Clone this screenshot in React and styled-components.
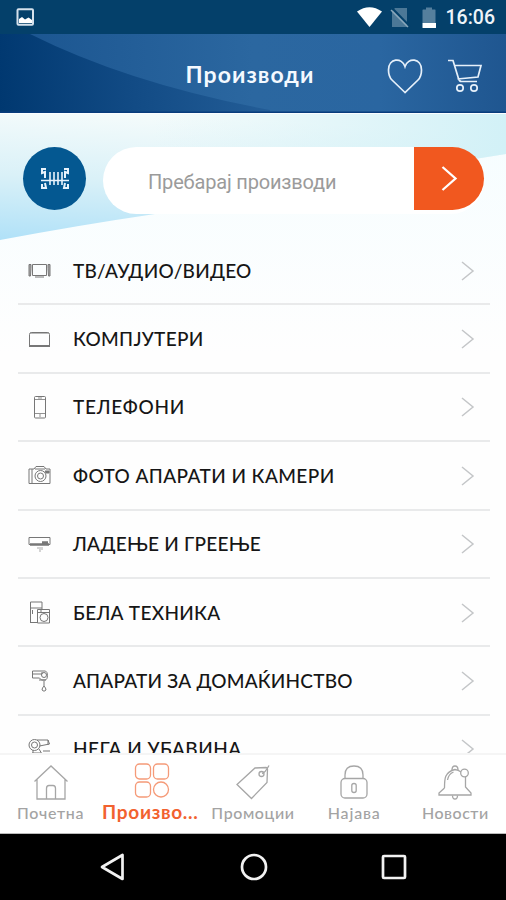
import React, { useState } from 'react';
import styled, { createGlobalStyle } from 'styled-components';

/* ──────────────  Styled components  ────────────── */

const GlobalStyle = createGlobalStyle`
  * {
    box-sizing: border-box;
  }

  body {
    margin: 0;
    background-color: #fff;
  }
`;

const Screen = styled.div`
  width: 506px;
  height: 900px;
  display: flex;
  flex-direction: column;
  overflow: hidden;
  background-color: #fefefe;
  font-family: Lato, 'Noto Sans', sans-serif;
`;

const StatusBar = styled.div`
  height: 34px;
  flex-shrink: 0;
  display: flex;
  align-items: center;
  justify-content: space-between;
  padding: 0 11px 0 16px;
  background-color: #04406a;

  svg {
    display: block;
  }
`;

const StatusGroup = styled.div`
  display: flex;
  align-items: center;
`;

const Clock = styled.span`
  font-family: Roboto, sans-serif;
  font-size: 19.5px;
  font-weight: 500;
  line-height: 34px;
  margin-left: 9px;
  padding-top: 2px;
  color: #eef4f9;
`;

const Header = styled.header`
  position: relative;
  height: 79px;
  flex-shrink: 0;
  display: grid;
  grid-template-columns: 1fr auto 1fr;
  align-items: center;
  padding: 0 23px 0 17px;
  background-color: #2a669f;
`;

const Backdrop = styled.svg`
  position: absolute;
  top: 0;
  left: 0;
  z-index: 0;
`;

const Title = styled.h1`
  position: relative;
  grid-column: 2;
  margin: 0;
  font-size: 23px;
  font-weight: 700;
  line-height: 30px;
  letter-spacing: 1.05px;
  color: #f4f9ff;
`;

const HeaderActions = styled.div`
  position: relative;
  display: flex;
  justify-content: flex-end;
  gap: 24px;
  padding-top: 4px;
`;

const PlainButton = styled.button`
  display: flex;
  padding: 0;
  border: none;
  background: transparent;
  cursor: pointer;
`;

const Content = styled.main`
  position: relative;
  flex: 1;
  min-height: 0;
  overflow: hidden;
`;

const SearchRow = styled.div`
  position: relative;
  display: flex;
  gap: 17px;
  height: 124px;
  padding: 34px 22px 0 23px;
`;

const ScanButton = styled(PlainButton)`
  width: 63px;
  height: 63px;
  flex-shrink: 0;
  align-items: center;
  justify-content: center;
  border-radius: 50%;
  background-color: #045891;
`;

const SearchField = styled.div`
  flex: 1;
  height: 67px;
  display: flex;
  align-items: flex-start;
  border-radius: 34px;
  background-color: #fff;
`;

const SearchInput = styled.input`
  flex: 1;
  min-width: 0;
  height: 67px;
  padding: 2px 0 0 45px;
  border: none;
  outline: none;
  background: transparent;
  font-family: Roboto, sans-serif;
  font-size: 20px;
  letter-spacing: -0.18px;
  color: #555;

  &::placeholder {
    color: #9b9b9b;
    opacity: 1;
  }
`;

const SubmitButton = styled(PlainButton)`
  width: 70px;
  height: 63px;
  align-items: center;
  justify-content: center;
  border-radius: 0 32px 32px 0;
  background-color: #f1581f;
`;

const CategoryList = styled.ul`
  position: relative;
  margin: 0;
  padding: 0 16px 0 18px;
  list-style: none;
`;

const CategoryRow = styled.li`
  height: 68.4px;
  display: flex;
  align-items: center;
  padding: 1px 15px 0 9px;
  border-bottom: 2px solid #e9eaeb;
  cursor: pointer;
`;

const CategoryIcon = styled.svg`
  width: 25px;
  height: 25px;
  flex-shrink: 0;
  fill: none;
  stroke: #777;
  stroke-width: 1;
`;

const CategoryName = styled.span`
  flex: 1;
  padding-left: 21px;
  font-size: 19px;
  font-weight: 500;
  line-height: 24px;
  letter-spacing: ${(props) => props.$tracking};
  white-space: nowrap;
  color: #161616;
`;

const TabBar = styled.nav`
  height: 81px;
  flex-shrink: 0;
  display: grid;
  grid-template-columns: repeat(5, 101.2px);
  border-top: 2px solid #f5f5f5;
  border-bottom: 1px solid #bbb;
  background-color: #fff;
`;

const Tab = styled.button`
  display: flex;
  flex-direction: column;
  align-items: center;
  min-width: 0;
  padding: ${(props) => (props.$active ? '7px 0 0' : '9px 0 0')};
  border: none;
  background: transparent;
  font-family: inherit;
  color: ${(props) => (props.$active ? '#f2622f' : '#a3a3a3')};
  cursor: pointer;

  svg {
    width: 36px;
    height: 36px;
    flex-shrink: 0;
    fill: none;
    stroke: ${(props) => (props.$active ? '#f59a78' : '#a6a6a6')};
    stroke-width: 1.3;
  }
`;

const TabLabel = styled.span`
  margin-top: ${(props) => (props.$active ? '4px' : '3px')};
  margin-left: ${(props) => (props.$active ? '-3px' : '0')};
  font-size: ${(props) => (props.$active ? '19px' : '16px')};
  font-weight: ${(props) => (props.$active ? 700 : 500)};
  line-height: 20px;
  letter-spacing: ${(props) => props.$tracking};
  white-space: nowrap;
`;

const SystemBar = styled.div`
  height: 66px;
  flex-shrink: 0;
  display: flex;
  align-items: center;
  justify-content: space-between;
  padding: 0 99px;
  background-color: #000;

  svg {
    fill: none;
    stroke: #f2f2f2;
    stroke-width: 2.7;
  }
`;

/* ──────────────  Data  ────────────── */

const categories = [
  {
    name: 'ТВ/АУДИО/ВИДЕО',
    tracking: '0.24px',
    icon: (
      <>
        <path d="M5.500 6.500h14v11h-14z" />
        <path d="M2 6.500h2v4l-.5 7.500H2z M21 6.500h2V18h-1.500l-.5-7.500z" fill="#aaa" />
        <path d="M8 19h9" />
      </>
    ),
  },
  {
    name: 'КОМПЈУТЕРИ',
    tracking: '0.3px',
    icon: (
      <>
        <path d="M2.500 18V7.500q0-2 2-2h16q2 0 2 2V18" />
        <path d="M2 19h21" strokeWidth="2" />
        <path d="M3.500 6h18" />
      </>
    ),
  },
  {
    name: 'ТЕЛЕФОНИ',
    tracking: '0.75px',
    icon: (
      <>
        <rect x="7.500" y="1.500" width="11" height="21.500" rx="1" />
        <path d="M7.500 4.500h11M7.500 18.500h11M13 19v3M11 3h4" strokeWidth=".8" />
      </>
    ),
  },
  {
    name: 'ФОТО АПАРАТИ И КАМЕРИ',
    tracking: '0.42px',
    icon: (
      <>
        <path d="M2 6h5l2-2.500h8L19 6h4v14.500H2z M5 6v14M8 6h10" />
        <circle cx="13.500" cy="13" r="5.500" />
        <circle cx="13.500" cy="13" r="3" />
        <path d="M18 8h4v2h-3z" fill="#777" />
      </>
    ),
  },
  {
    name: 'ЛАДЕЊЕ И ГРЕЕЊЕ',
    tracking: '0.24px',
    icon: (
      <>
        <path d="M2 5.500h21v7H2z" />
        <path d="M3 12.500h19M15 10.500h6" strokeWidth="2.500" />
        <path d="M11 15v2M13 15v5M15 15v3" stroke="#aaa" />
      </>
    ),
  },
  {
    name: 'БЕЛА ТЕХНИКА',
    tracking: '0.3px',
    icon: (
      <>
        <path d="M3.500 23V2h11.500v7M3.500 8H15M5.500 10v4M3.500 22.500H10" />
        <path d="M10.500 9.500h12v13.500h-12zM10.500 12.500h12M13 11h2" />
        <circle cx="17" cy="17.500" r="4" />
      </>
    ),
  },
  {
    name: 'АПАРАТИ ЗА ДОМАЌИНСТВО',
    tracking: '0.2px',
    icon: (
      <>
        <path d="M5.500 2h13q2 1 2 4.500t-2 4.500h-4l-2-2h-7zM6 5h9V3" />
        <circle cx="17" cy="6" r="2.500" />
        <path d="M12 11h7M17 12v5M15 21q0-2 2-4q2 2 2 4q-2 2.500-4 0z" />
      </>
    ),
  },
  {
    name: 'НЕГА И УБАВИНА',
    tracking: '0.48px',
    icon: (
      <>
        <path d="M10 3h11l1.500 4-10 2M21 3v5" />
        <circle cx="7.500" cy="8" r="5.500" />
        <circle cx="7.500" cy="8" r="3" />
        <path d="M6 13v5M12 12l3 5M16 14h7M5 16h9" />
      </>
    ),
  },
];

const tabs = [
  {
    label: 'Почетна',
    tracking: '0.7px',
    icon: <path d="M1.500 17.500L18 2l16.500 15.500M4 15.500V35h28V15.500M13.500 35V24.500q0-3 2.500-3h4q2.500 0 2.500 3V35" />,
  },
  {
    label: 'Произво...',
    tracking: '0.7px',
    icon: (
      <>
        <rect x="1.500" y="2" width="15" height="15" rx="4" />
        <rect x="19.500" y="2" width="15" height="15" rx="4" />
        <rect x="1.500" y="20" width="15" height="15" rx="4" />
        <circle cx="27" cy="27.500" r="7.500" />
      </>
    ),
  },
  {
    label: 'Промоции',
    tracking: '0.6px',
    icon: (
      <>
        <path d="M20 4l11-.5q1.500 0 1.500 1.500l-.5 13.500L16.500 34.500 2 20.500z" />
        <circle cx="26.500" cy="10" r="2.500" />
        <path d="M27 9.500Q30 9 34 1.500" />
      </>
    ),
  },
  {
    label: 'Најава',
    tracking: '0.85px',
    icon: (
      <>
        <path d="M9 14.500V11q0-9 9-9t9 9v3.500" />
        <rect x="5" y="14.500" width="26" height="19.500" rx="4" />
        <path d="M15.800 21.500q0-2 2.200-2t2.200 2v5q0 2-2.200 2t-2.200-2z" />
      </>
    ),
  },
  {
    label: 'Новости',
    tracking: '0.5px',
    icon: (
      <>
        <path d="M7.500 24c0-9 0-16 10.500-18.500q3.500.5 6 2.500M28.500 13v10l5.500 6v2H2v-2l5.500-5" />
        <path d="M15 6q0-4 3-4t3 4M10.500 16q1-6 6-8M15.500 31.500q0 3.500 2.500 3.500t2.500-3.500" />
        <circle cx="27.500" cy="9" r="3.800" />
      </>
    ),
  },
];

/* ──────────────  Component  ────────────── */

const App = () => {
  const [activeTab, setActiveTab] = useState('Произво...');
  const [query, setQuery] = useState('');

  return (
    <Screen>
      <GlobalStyle />

      <StatusBar>
        <svg width="19" height="18" viewBox="0 0 19 18">
          <rect x="1.500" y="1.300" width="15.500" height="15.500" rx="1" fill="none" stroke="#d5e1ec" strokeWidth="2" />
          <path d="M3 15v-4l3-2 3 2.500 3.500-2L16 12v3z" fill="#fff" />
        </svg>
        <StatusGroup>
          <svg width="80" height="24" viewBox="0 0 80 24">
            <path d="M0 6.500Q12.500-2 25 6.500L12.500 22z" fill="#fff" />
            <path d="M38 3h12v19H35V6z" fill="#4c7897" />
            <path d="M35.500 3.500L53 21.500" stroke="#04406a" strokeWidth="2" />
            <path d="M34 5l17 17" stroke="#8aa7bb" strokeWidth="1.500" />
            <path d="M66 4.500h3V2.500h6v2h3q.5 0 .5.500V18h-13V5z" fill="#557f9d" />
            <path d="M65.500 18h13.500v4.500q0 .500-.500.500h-12.500q-.500 0-.500-.500z" fill="#fff" />
          </svg>
          <Clock>16:06</Clock>
        </StatusGroup>
      </StatusBar>

      <Header>
        <Backdrop width="506" height="79" viewBox="0 0 506 79">
          <defs>
            <linearGradient id="headerLight" x1="0" x2="1">
              <stop offset="0" stopColor="#1a548f" />
              <stop offset=".5" stopColor="#2b67a0" />
              <stop offset=".75" stopColor="#2a66a1" />
              <stop offset="1" stopColor="#1f5690" />
            </linearGradient>
            <linearGradient id="headerDark" x1="0" x2="270" y1="79" y2="60" gradientUnits="userSpaceOnUse">
              <stop offset="0" stopColor="#003870" />
              <stop offset=".5" stopColor="#124b85" />
              <stop offset="1" stopColor="#235d97" />
            </linearGradient>
          </defs>
          <rect width="506" height="79" fill="url(#headerLight)" />
          <path d="M0 0H30Q130 50 270 76V79H0z" fill="url(#headerDark)" />
          <rect y="77.500" width="506" height="1.500" fill="#083c7c" />
        </Backdrop>
        <Title>Производи</Title>
        <HeaderActions>
          <PlainButton aria-label="Омилени">
            <svg width="36" height="36" viewBox="0 0 36 36" fill="none" stroke="#e6f0fa" strokeWidth="1.700">
              <path d="M18 34.500L5 22Q1.500 18.500 1.500 12C1.500 0 15 -1 18 8.500C21-1 34.500 0 34.500 12Q34.500 18.500 31 22z" />
            </svg>
          </PlainButton>
          <PlainButton aria-label="Кошничка">
            <svg width="36" height="36" viewBox="0 0 36 36" fill="none" stroke="#e6f0fa" strokeWidth="1.700">
              <path d="M1 2.500h5l5.500 18q.8 3 3 3h15.500M7 7.500h27l-3 11.500-20.500 2" />
              <circle cx="13" cy="30" r="3.200" />
              <circle cx="27" cy="30" r="3.200" />
            </svg>
          </PlainButton>
        </HeaderActions>
      </Header>

      <Content>
        <Backdrop width="506" height="240" viewBox="0 0 506 240">
          <defs>
            <linearGradient id="sky" x1=".2" y1="0" x2="0" y2="1">
              <stop offset="0" stopColor="#f4fbfb" />
              <stop offset=".5" stopColor="#daf1f8" />
              <stop offset="1" stopColor="#b0e1f8" />
            </linearGradient>
            <linearGradient id="skyRight" x1="0" x2="1">
              <stop offset=".3" stopColor="#d6f2f7" stopOpacity="0" />
              <stop offset="1" stopColor="#d2f1f7" />
            </linearGradient>
            <linearGradient id="mist" x1="0" x2="0" y1="0" y2="1">
              <stop offset="0" stopColor="#f5fdff" />
              <stop offset="1" stopColor="#fefefe" />
            </linearGradient>
          </defs>
          <rect width="506" height="240" fill="url(#mist)" />
          <path d="M0 0H506V41Q330 68 155 101Q80 112 0 127z" fill="url(#sky)" />
          <path d="M0 0H506V41Q330 68 155 101Q80 112 0 127z" fill="url(#skyRight)" />
          <rect width="506" height="1" fill="#fafdff" />
        </Backdrop>

        <SearchRow>
          <ScanButton aria-label="Скенирај">
            <svg width="30" height="24" viewBox="0 0 30 24" fill="none" stroke="#e8f3fc" strokeWidth="2">
              <path d="M6 2H2v4l3-1v6M24 2h4v4l-3-1v6M2 17v4h4l-1-5M28 17v4h-4l1-5" />
              <path d="M10 5v13M14 5v13M18 5v13M22 5v13" strokeWidth="1.600" />
              <path d="M1 13.500h28" strokeWidth="1.500" />
            </svg>
          </ScanButton>
          <SearchField>
            <SearchInput
              value={query}
              placeholder="Пребарај производи"
              onChange={(e) => setQuery(e.target.value)}
            />
            <SubmitButton aria-label="Пребарај">
              <svg width="18" height="28" viewBox="0 0 18 28" fill="none" stroke="#fff" strokeWidth="2.300">
                <path d="M2.500 2L15.500 13.500 2.500 25" />
              </svg>
            </SubmitButton>
          </SearchField>
        </SearchRow>

        <CategoryList>
          {categories.map((category) => (
            <CategoryRow key={category.name}>
              <CategoryIcon viewBox="0 0 25 25">{category.icon}</CategoryIcon>
              <CategoryName $tracking={category.tracking}>{category.name}</CategoryName>
              <svg width="15" height="22" viewBox="0 0 15 22" fill="none" stroke="#c4c6c8" strokeWidth="1.500">
                <path d="M2 2l11 9L2 20" />
              </svg>
            </CategoryRow>
          ))}
        </CategoryList>
      </Content>

      <TabBar>
        {tabs.map((tab) => {
          const active = tab.label === activeTab;
          return (
            <Tab key={tab.label} $active={active} onClick={() => setActiveTab(tab.label)}>
              <svg viewBox="0 0 36 36">{tab.icon}</svg>
              <TabLabel $active={active} $tracking={tab.tracking}>
                {tab.label}
              </TabLabel>
            </Tab>
          );
        })}
      </TabBar>

      <SystemBar>
        <svg width="28" height="30" viewBox="0 0 28 30">
          <path d="M3 15L23.500 3V27z" strokeLinejoin="round" />
        </svg>
        <svg width="28" height="28" viewBox="0 0 28 28">
          <circle cx="14" cy="14" r="12" />
        </svg>
        <svg width="26" height="26" viewBox="0 0 26 26">
          <rect x="2" y="2" width="22" height="22" rx="1" />
        </svg>
      </SystemBar>
    </Screen>
  );
};

export default App;
